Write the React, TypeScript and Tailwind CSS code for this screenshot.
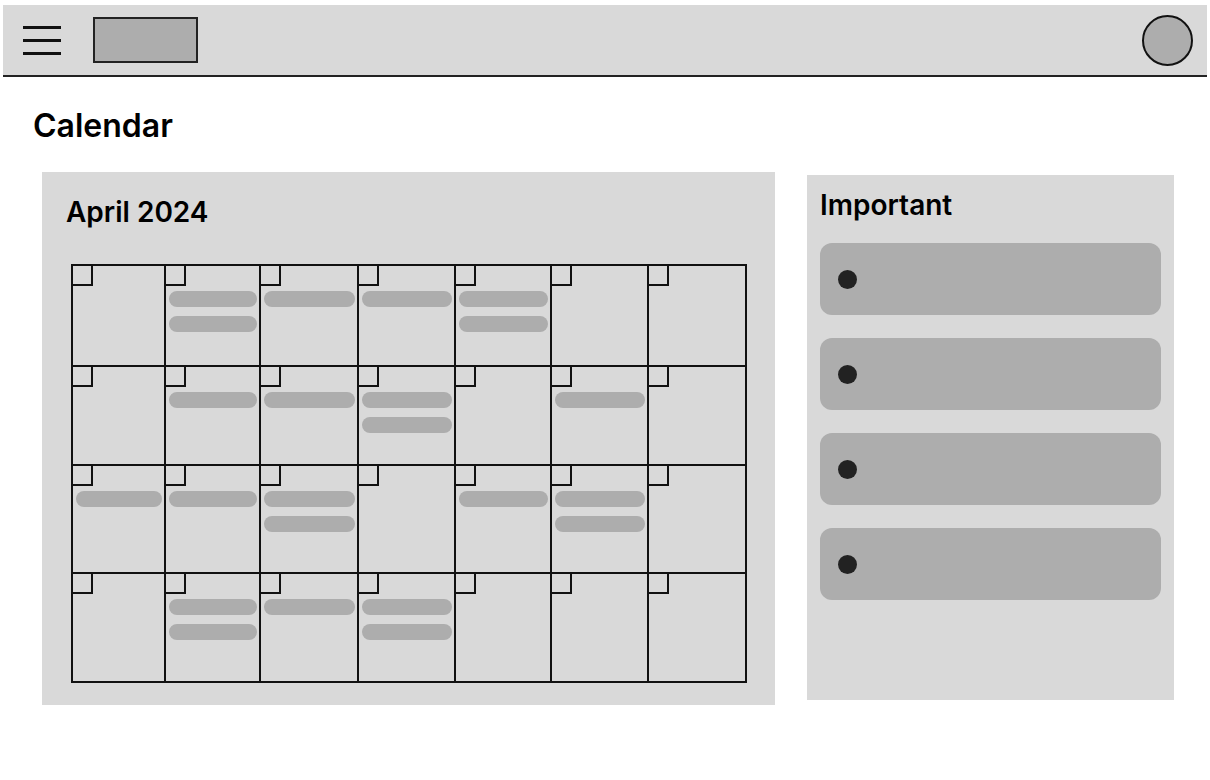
import React from 'react'

// number of event pills per day cell, row by row
const weeks: number[][] = [
  [0, 2, 1, 1, 2, 0, 0],
  [0, 1, 1, 2, 0, 1, 0],
  [1, 1, 2, 0, 1, 2, 0],
  [0, 2, 1, 2, 0, 0, 0],
]

const rowHeights = ['h-[99px]', 'h-[97px]', 'h-[106px]', 'h-[107px]']

function DayCell({ pills, height }: { pills: number; height: string }) {
  return (
    <div className={`relative bg-[#d9d9d9] ${height}`}>
      <div className="absolute left-0 top-0 w-[20px] h-[20px] border-r-2 border-b-2 border-[#111]" />
      <div className="flex flex-col gap-[9px] pt-[25px] pl-[3px] pr-[2px]">
        {Array.from({ length: pills }).map((_, i) => (
          <div key={i} className="h-[16px] rounded-full bg-[#adadad]" />
        ))}
      </div>
    </div>
  )
}

export default function App() {
  return (
    <div className="min-h-screen bg-white pt-[5px] px-[3px]" style={{ fontFamily: 'Inter, "Noto Sans", sans-serif' }}>
      {/* top bar */}
      <header className="h-[72px] bg-[#d9d9d9] border-b-2 border-[#222] flex items-center pl-[20px] pr-[14px]">
        <div className="flex flex-col gap-[10px] w-[38px]">
          <div className="h-[3px] bg-[#111]" />
          <div className="h-[3px] bg-[#111]" />
          <div className="h-[3px] bg-[#111]" />
        </div>
        <div className="ml-[32px] w-[105px] h-[46px] bg-[#adadad] border-2 border-[#222]" />
        <div className="ml-auto w-[51px] h-[51px] rounded-full bg-[#adadad] border-2 border-[#111]" />
      </header>

      <main className="pl-[30px] pt-[30px]">
        <h1 className="text-[32px] leading-[38px] font-semibold text-black">Calendar</h1>

        <div className="flex items-start gap-[32px] mt-[27px] ml-[9px]">
          {/* calendar panel */}
          <section className="w-[733px] h-[533px] bg-[#d9d9d9] pl-[29px] pt-[23px]">
            <h2 className="-ml-[5px] text-[28px] leading-[34px] font-semibold text-black">April 2024</h2>
            <div className="mt-[35px] w-[676px] grid grid-cols-[91px_93px_96px_95px_94px_95px_96px] gap-[2px] p-[2px] bg-[#111]">
              {weeks.map((week, r) =>
                week.map((pills, c) => <DayCell key={`${r}-${c}`} pills={pills} height={rowHeights[r]} />)
              )}
            </div>
          </section>

          {/* important list */}
          <aside className="mt-[3px] w-[367px] h-[525px] bg-[#d9d9d9] px-[13px] pt-[13px]">
            <h2 className="text-[28px] leading-[34px] font-semibold text-black">Important</h2>
            <div className="mt-[21px] flex flex-col gap-[23px]">
              {[0, 1, 2, 3].map((i) => (
                <div key={i} className="h-[72px] rounded-[12px] bg-[#adadad] flex items-center pl-[18px]">
                  <div className="w-[19px] h-[19px] rounded-full bg-[#222]" />
                </div>
              ))}
            </div>
          </aside>
        </div>
      </main>
    </div>
  )
}
